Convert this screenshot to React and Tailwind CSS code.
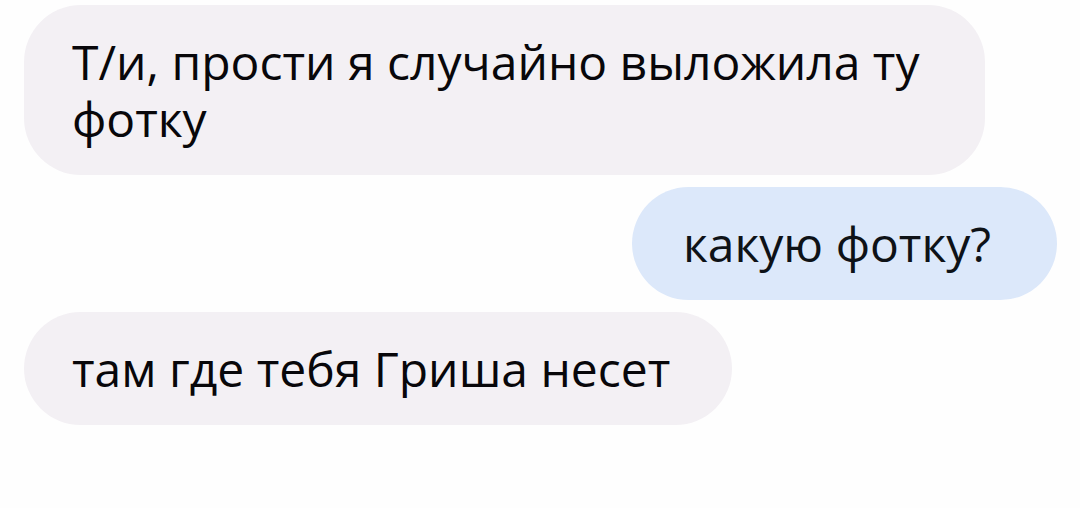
const messages = [
  { id: 1, text: "Т/и, прости я случайно выложила ту фотку", mine: false },
  { id: 2, text: "какую фотку?", mine: true },
  { id: 3, text: "там где тебя Гриша несет", mine: false },
];

function Message({ text, mine }) {
  return (
    <li
      className={`max-w-[961px] py-7 rounded-[57px] ${
        mine
          ? "self-end pl-[51px] pr-[66px] bg-[#dce8fa] text-[#0e1217]"
          : "self-start pl-12 pr-[62px] bg-[#f3f0f4] text-[#08070a]"
      }`}
    >
      <p>{text}</p>
    </li>
  );
}

export default function App() {
  return (
    <main className="min-h-screen bg-[#fefefe] pl-6 pr-[23px] pt-[5px] font-['Open_Sans','Noto_Sans',sans-serif]">
      <ul className="flex flex-col gap-3 text-[48px] leading-[57px]">
        {messages.map((message) => (
          <Message key={message.id} text={message.text} mine={message.mine} />
        ))}
      </ul>
    </main>
  );
}
